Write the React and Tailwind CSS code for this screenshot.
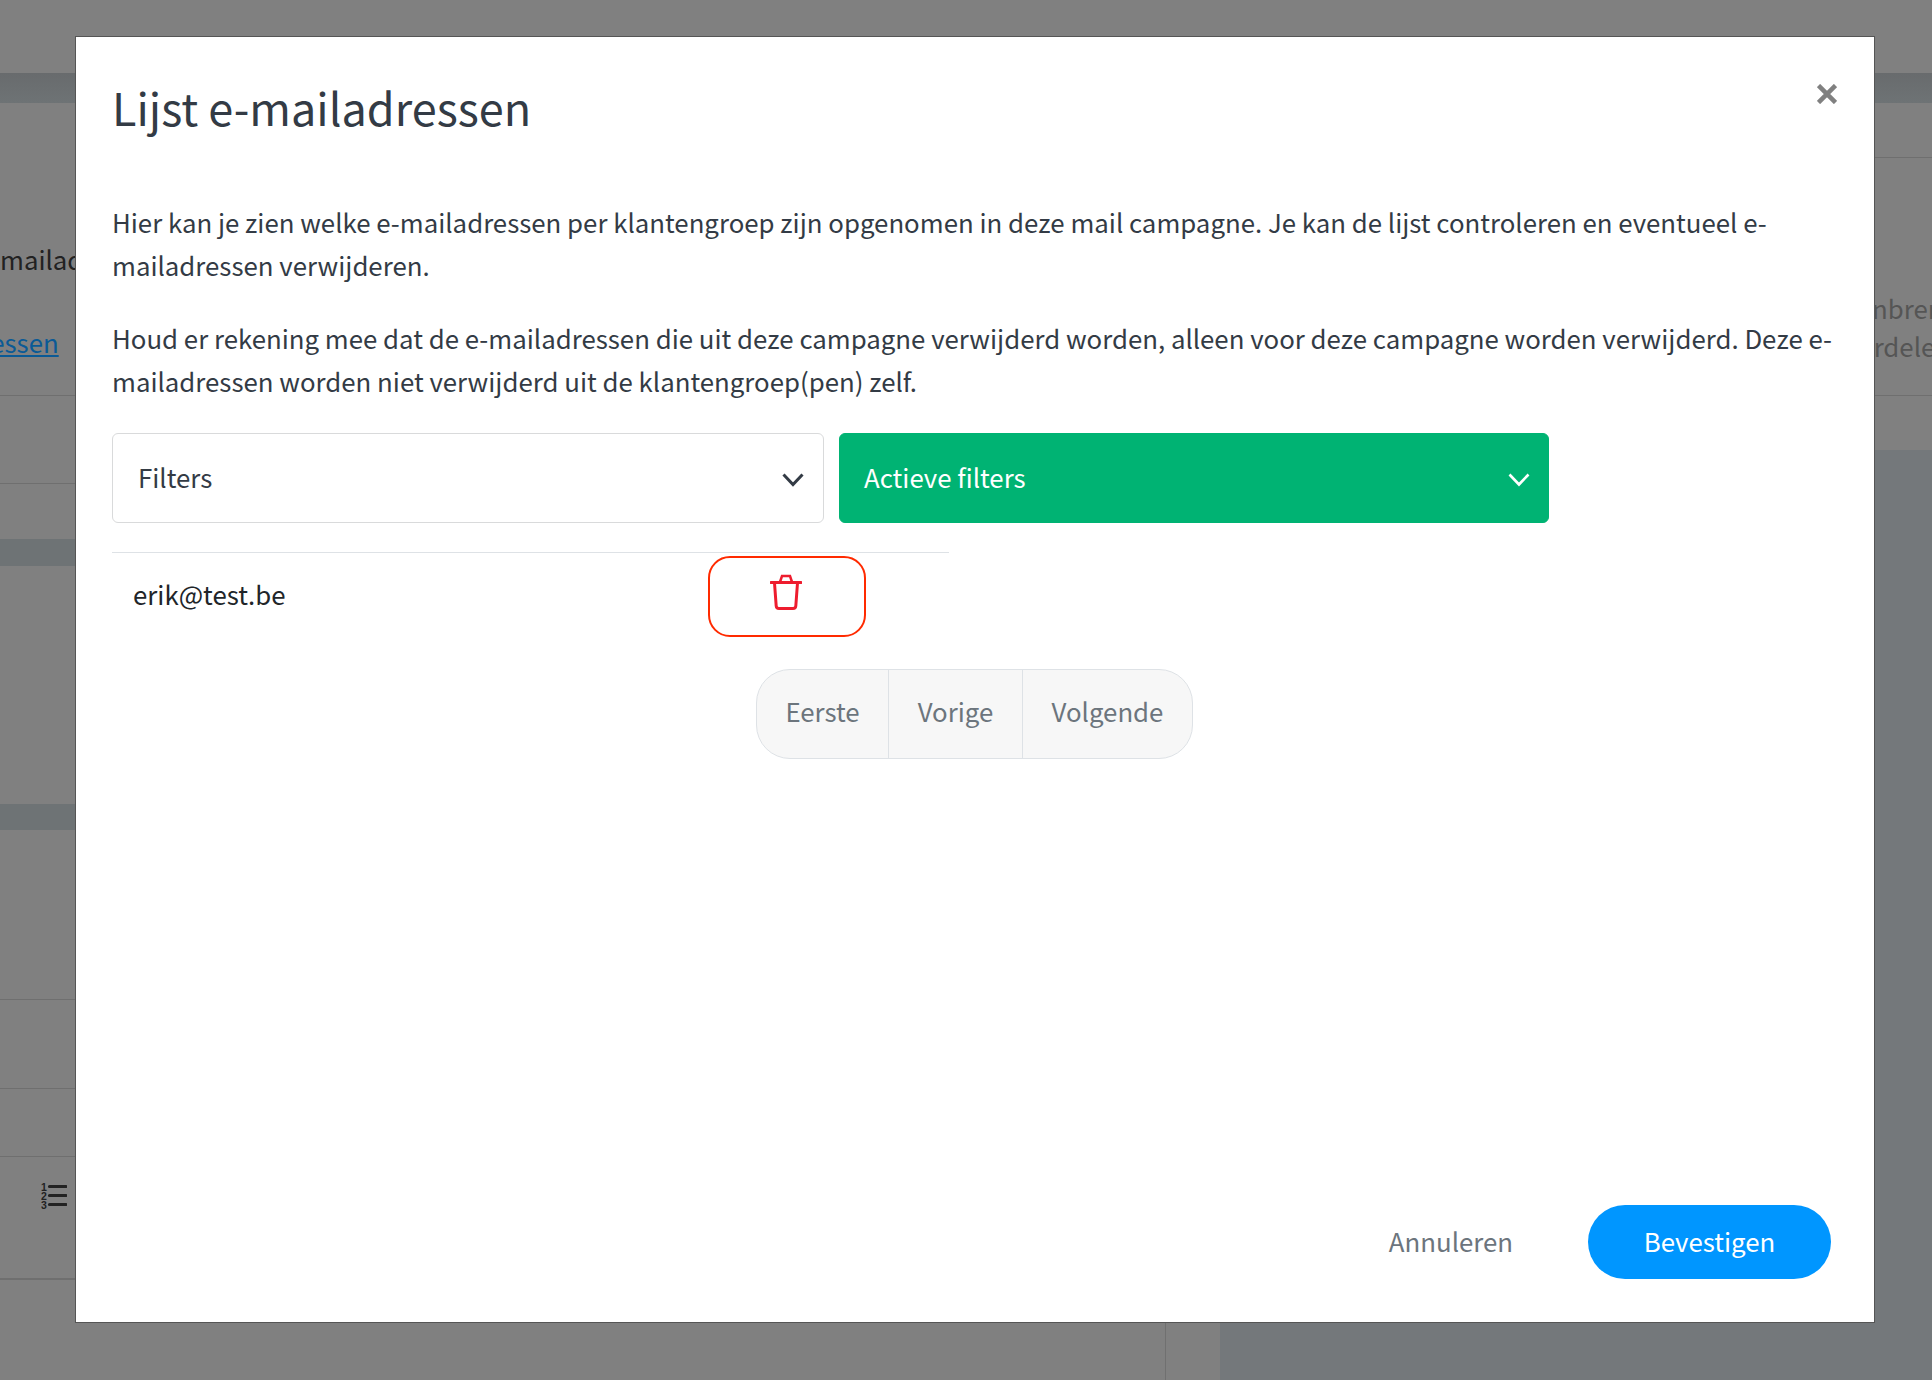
import React from "react";

const bodyFont = { fontFamily: '"Noto Sans CJK SC", "Noto Sans", sans-serif' };

const Chevron = ({ className, width = 2.6 }) => (
  <svg width="22" height="14" viewBox="0 0 22 14" fill="none" className={className}>
    <path d="M1.5 1.5 L11 11.5 L20.5 1.5" stroke="currentColor" strokeWidth={width} />
  </svg>
);

const TrashIcon = () => (
  <svg width="32" height="36" viewBox="0 0 32 36" fill="none" className="ml-[-2px] mt-[-10px] text-[#ee1c2e]">
    <path d="M1 8.5 H31" stroke="currentColor" strokeWidth="3" strokeLinecap="round" />
    <path d="M10 8 L12 2 H20 L22 8" stroke="currentColor" strokeWidth="2.5" />
    <path
      d="M4.5 9 L6.2 32 Q6.4 34.5 9 34.5 H23 Q25.6 34.5 25.8 32 L27.5 9"
      stroke="currentColor"
      strokeWidth="3"
    />
  </svg>
);

const CloseIcon = () => (
  <svg width="20" height="20" viewBox="0 0 20 20" fill="none" className="text-[#808080]">
    <path d="M1.5 1.5 L18.5 18.5 M18.5 1.5 L1.5 18.5" stroke="currentColor" strokeWidth="4.6" />
  </svg>
);

const NumberedListIcon = () => (
  <svg width="26" height="27" viewBox="0 0 26 27" className="text-[#222]">
    <g fill="currentColor" fontSize="10.5" fontWeight="700" fontFamily="Liberation Sans, sans-serif">
      <text x="0" y="8">1</text>
      <text x="0" y="17">2</text>
      <text x="0" y="26">3</text>
    </g>
    <path d="M8.5 3.5 H25 M8.5 12.5 H25 M8.5 21.5 H25" stroke="currentColor" strokeWidth="3.2" strokeLinecap="round" />
  </svg>
);

const BackgroundPage = () => (
  <div className="flex h-[1380px] w-full flex-col overflow-hidden bg-[#808080]">
    <div className="h-[73px] shrink-0" />
    <div className="h-[30px] shrink-0 bg-linear-to-b from-[#686b6d] to-[#6e7375]" />
    <div className="flex flex-1">
      {/* left column */}
      <div className="flex w-[1220px] shrink-0 flex-col">
        <div className="h-[293px] border-b border-[#6f6f6f] pt-[138px] text-[25.8px] leading-[36px] text-[#222]">
          <div className="whitespace-nowrap">mailadressen</div>
          <div className="ml-[-50px] mt-[47px] whitespace-nowrap text-[#0a5a96] underline">adressen</div>
        </div>
        <div className="h-[88px] border-b border-[#6f6f6f]" />
        <div className="h-[55px]" />
        <div className="h-[27px] bg-[#6e7375]" />
        <div className="h-[238px]" />
        <div className="h-[26px] bg-[#6e7375]" />
        <div className="h-[170px] border-b border-[#6f6f6f]" />
        <div className="h-[89px] border-b border-[#6f6f6f]" />
        <div className="h-[68px] border-b border-[#6f6f6f]" />
        <div className="h-[123px] border-b-2 border-[#6f6f6f] pl-[41px] pt-[26px]">
          <NumberedListIcon />
        </div>
        <div className="h-[100px] w-[1166px] border-r border-[#707070]" />
      </div>
      {/* right column */}
      <div className="flex flex-1 flex-col overflow-hidden">
        <div className="h-[55px] border-b border-[#6f6f6f]" />
        <div className="h-[238px] border-b border-[#6f6f6f] pt-[131px] text-[25.8px] leading-[38px] text-[#555]">
          <div className="ml-[623px] whitespace-nowrap">aanbrengen</div>
          <div className="ml-[626px] whitespace-nowrap">verdelen</div>
        </div>
        <div className="h-[54px]" />
        <div className="flex-1 bg-[#74787b]" />
      </div>
    </div>
  </div>
);

const App = () => {
  return (
    <div className="relative h-[1380px] overflow-hidden" style={bodyFont}>
      <BackgroundPage />
      <div className="absolute left-[75px] top-[36px] flex h-[1287px] w-[1800px] flex-col border border-[#555] bg-white pb-[43px] pl-[36px] pr-[43px] pt-[40px]">
        <div className="flex items-start justify-between">
          <h1 className="text-[45px] font-normal leading-[60px] text-[#333b45]">Lijst e-mailadressen</h1>
          <div className="mr-[-6px] mt-[7px]">
            <CloseIcon />
          </div>
        </div>

        <div className="mr-[-6px] mt-[63px] text-[25.8px] leading-[43px] text-[#333b45]">
          <p>
            Hier kan je zien welke e-mailadressen per klantengroep zijn opgenomen in deze mail campagne. Je kan de lijst controleren en eventueel e-mailadressen verwijderen.
          </p>
          <p className="mt-[30px]">
            Houd er rekening mee dat de e-mailadressen die uit deze campagne verwijderd worden, alleen voor deze campagne worden verwijderd. Deze e-mailadressen worden niet verwijderd uit de klantengroep(pen) zelf.
          </p>
        </div>

        <div className="mt-[31px] flex w-[1437px] gap-[15px]">
          <div className="flex h-[90px] flex-1 items-center justify-between rounded-[6px] border border-[#d9dadb] bg-white pb-[2px] pl-[25px] pr-[19px] text-[25.8px] text-[#333b45]">
            <span>Filters</span>
            <Chevron className="mt-[5px]" width={3} />
          </div>
          <div className="flex h-[90px] flex-1 items-center justify-between rounded-[6px] border border-[#00b373] bg-[#00b373] pb-[2px] pl-[24px] pr-[18px] text-[25.8px] text-white">
            <span>Actieve filters</span>
            <Chevron className="mt-[5px]" />
          </div>
        </div>

        <div className="mt-[29px] w-[837px] border-t border-[#dee2e6] pt-[3px]">
          <div className="flex items-center">
            <div className="w-[596px] pb-[5px] pl-[21px] text-[25.8px] leading-[36px] text-[#212529]">erik@test.be</div>
            <button className="flex h-[81px] w-[158px] items-center justify-center rounded-[22px] border-2 border-[#ff2a00] bg-white">
              <TrashIcon />
            </button>
          </div>
        </div>

        <div className="ml-[644px] mt-[32px] flex h-[90px] w-[437px] overflow-hidden rounded-[34px] border border-[#dee2e6] bg-[#f7f7f7] text-[25.8px] text-[#6c757d]">
          <div className="flex w-[132px] items-center justify-center border-r border-[#dee2e6] pb-[5px]">Eerste</div>
          <div className="flex w-[134px] items-center justify-center border-r border-[#dee2e6] pb-[5px]">Vorige</div>
          <div className="flex w-[169px] items-center justify-center pb-[5px]">Volgende</div>
        </div>

        <div className="mt-auto flex items-center justify-end">
          <span className="mr-[75px] pb-[2px] text-[25.8px] text-[#6c757d]">Annuleren</span>
          <button className="flex h-[74px] w-[243px] items-center justify-center rounded-full bg-[#0096ff] pb-[2px] text-[25.8px] text-white">
            Bevestigen
          </button>
        </div>
      </div>
    </div>
  );
};

export default App;
